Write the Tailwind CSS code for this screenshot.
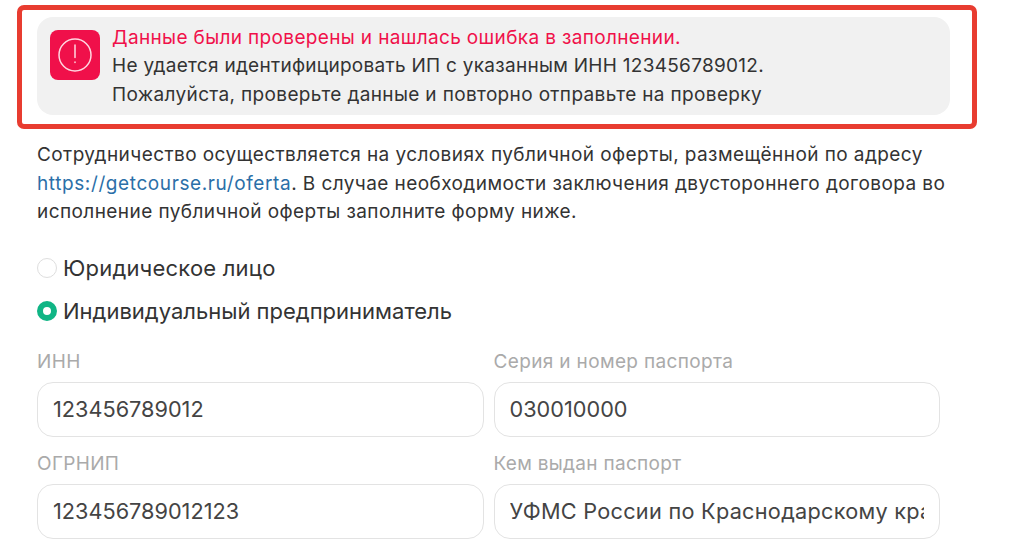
<!DOCTYPE html>
<html lang="ru">
<head>
<meta charset="utf-8">
<script src="https://cdn.jsdelivr.net/npm/@tailwindcss/browser@4"></script>
<title>Оферта</title>
</head>
<body class="bg-white font-['Inter',sans-serif] text-[#333] overflow-hidden">
<div class="w-[1023px] h-[554px] overflow-hidden pt-[5px]">
    <div class="ml-[17px] w-[960px] h-[124px] border-[5px] border-[#e83c30] rounded-[7px] px-[15px] pt-[7px]">
        <div class="flex items-start gap-3 w-[913px] h-[98px] bg-[#f1f1f1] rounded-2xl pl-[13px] pt-[7px]">
            <div class="mt-[6px] w-[50px] h-[50px] rounded-lg bg-[#f0104a] flex items-center justify-center shrink-0">
                <svg width="36" height="36" viewBox="0 0 36 36" fill="none" stroke="#ffd6e0" stroke-width="1.5" stroke-linecap="round">
                    <circle cx="18" cy="18" r="16"/>
                    <path d="M18 8v12.5M18 25v.6"/>
                </svg>
            </div>
            <div class="text-[19px] leading-[28.4px] tracking-[0.35px]">
                <div class="text-[#f0104a]">Данные были проверены и нашлась ошибка в заполнении.</div>
                <div class="tracking-[0.28px]">Не удается идентифицировать ИП с указанным ИНН 123456789012.</div>
                <div>Пожалуйста, проверьте данные и повторно отправьте на проверку</div>
            </div>
        </div>
    </div>
    <p class="ml-[37px] mt-[12px] w-[920px] text-[19px] leading-[28.5px] tracking-[0.42px]">Сотрудничество осуществляется на условиях публичной оферты, размещённой по адресу <a class="text-[#2b6fa8] tracking-[0.6px]">https://getcourse.ru/oferta</a>. В случае необходимости заключения двустороннего договора во исполнение публичной оферты заполните форму ниже.</p>
    <div class="ml-[37px] mt-[30px] flex flex-col gap-[21px] text-[22px] leading-[22px]">
        <label class="flex items-center gap-[6px]">
            <span class="w-5 h-5 rounded-full border border-[#dedede] bg-white"></span>
            <span class="tracking-[0.2px]">Юридическое лицо</span>
        </label>
        <label class="flex items-center gap-[6px]">
            <span class="w-5 h-5 rounded-full border-[6px] border-[#10b585] bg-white"></span>
            <span>Индивидуальный предприниматель</span>
        </label>
    </div>
    <div class="ml-[37px] mt-[29px] w-[903px] grid grid-cols-2 gap-x-[10px] gap-y-[16px]">
        <div>
            <div class="text-[19px] leading-[22px] tracking-[0.35px] text-[#aaa]">ИНН</div>
            <div class="mt-[9px] h-[55px] border border-[#e3e3e3] rounded-2xl px-[15px] flex items-center text-[21.7px] text-[#444]">123456789012</div>
        </div>
        <div>
            <div class="text-[19px] leading-[22px] tracking-[0.35px] text-[#aaa]">Серия и номер паспорта</div>
            <div class="mt-[9px] h-[55px] border border-[#e3e3e3] rounded-2xl px-[15px] flex items-center text-[21.7px] text-[#444]">030010000</div>
        </div>
        <div>
            <div class="text-[19px] leading-[22px] tracking-[0.35px] text-[#aaa]">ОГРНИП</div>
            <div class="mt-[9px] h-[55px] border border-[#e3e3e3] rounded-2xl px-[15px] flex items-center text-[21.7px] text-[#444]">123456789012123</div>
        </div>
        <div>
            <div class="text-[19px] leading-[22px] tracking-[0.3px] text-[#aaa]">Кем выдан паспорт</div>
            <div class="mt-[9px] h-[55px] border border-[#e3e3e3] rounded-2xl px-[15px] flex items-center text-[21.7px] text-[#444]"><span class="block overflow-hidden whitespace-nowrap tracking-[0.27px]">УФМС России по Краснодарскому краю</span></div>
        </div>
    </div>
</div>
</body>
</html>
